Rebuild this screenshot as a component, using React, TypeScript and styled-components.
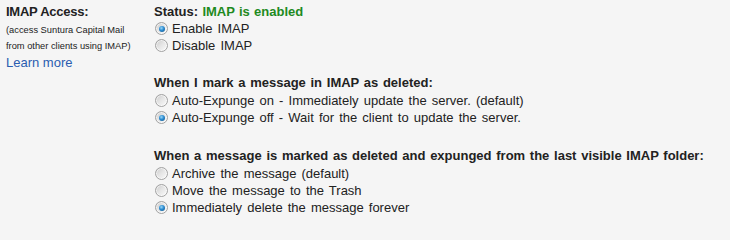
import React, {useState} from 'react';
import styled, {createGlobalStyle} from 'styled-components';

const GlobalStyle = createGlobalStyle`
    html, body {
        margin: 0;
        padding: 0;
        background: #f5f5f5;
    }
    body {
        font-family: Arial, "Liberation Sans", sans-serif;
        font-size: 13px;
        color: #222;
        overflow: hidden;
    }
`;

const Page = styled.div`
    display: grid;
    grid-template-columns: 148px 1fr;
    padding: 4px 0 0 6px;
    width: 730px;
    height: 224px;
    box-sizing: border-box;
`;

const Side = styled.div`
    display: flex;
    flex-direction: column;
`;

const SideTitle = styled.div`
    font-weight: bold;
    line-height: 16px;
    letter-spacing: -0.25px;
`;

const SideNote = styled.div`
    font-size: 9.3px;
    line-height: 16px;
    margin-top: 2px;
    color: #222;
`;

const LearnMore = styled.a`
    color: #2a5db0;
    text-decoration: none;
    line-height: 17px;
    cursor: pointer;
`;

const Main = styled.div`
    display: flex;
    flex-direction: column;
    word-spacing: 1.5px;
`;

const Group = styled.div<{$gap?: number}>`
    display: flex;
    flex-direction: column;
    margin-top: ${({$gap}) => $gap ?? 0}px;
`;

const Status = styled.div`
    font-weight: bold;
    line-height: 16px;
    word-spacing: 0.7px;
`;

const Enabled = styled.span`
    color: #1e8a1e;
`;

const Heading = styled.div`
    font-weight: bold;
    line-height: 17px;
    margin-bottom: 1px;
    word-spacing: 1.1px;
`;

const Option = styled.label`
    display: flex;
    align-items: center;
    height: 17px;
    gap: 4px;
    cursor: pointer;
`;

const Radio = styled.input.attrs({type: 'radio'})`
    appearance: none;
    -webkit-appearance: none;
    margin: 0 0 0 1px;
    width: 13px;
    height: 13px;
    border-radius: 50%;
    border: 1px solid #a2a2a2;
    background: linear-gradient(135deg, #c9c9c9 0%, #e4e4e4 45%, #fbfbfb 100%);
    box-shadow: inset 0 0 0 1px rgba(255, 255, 255, 0.6);
    box-sizing: border-box;
    position: relative;
    flex: none;

    &:checked::after {
        content: '';
        position: absolute;
        left: 2.5px;
        top: 2.5px;
        width: 6px;
        height: 6px;
        border-radius: 50%;
        background: radial-gradient(circle at 40% 35%, #9ad8f8 0%, #2a8ad0 45%, #12507f 100%);
    }
`;

type OptionDef = {value: string; label: string};

const RadioGroup: React.FC<{name: string; options: OptionDef[]; initial: string}> = ({name, options, initial}) => {
    const [value, setValue] = useState(initial);
    return (
        <>
            {options.map(o => (
                <Option key={o.value}>
                    <Radio name={name} checked={value === o.value} onChange={() => setValue(o.value)} />
                    {o.label}
                </Option>
            ))}
        </>
    );
};

export default function App() {
    return (
        <>
            <GlobalStyle />
            <Page>
                <Side>
                    <SideTitle>IMAP Access:</SideTitle>
                    <SideNote>
                        (access Suntura Capital Mail<br />from other clients using IMAP)
                    </SideNote>
                    <LearnMore>Learn more</LearnMore>
                </Side>
                <Main>
                    <Group>
                        <Status>
                            Status: <Enabled>IMAP is enabled</Enabled>
                        </Status>
                        <RadioGroup
                            name="imap"
                            initial="on"
                            options={[
                                {value: 'on', label: 'Enable IMAP'},
                                {value: 'off', label: 'Disable IMAP'},
                            ]}
                        />
                    </Group>
                    <Group $gap={20}>
                        <Heading>When I mark a message in IMAP as deleted:</Heading>
                        <RadioGroup
                            name="expunge"
                            initial="off"
                            options={[
                                {value: 'on', label: 'Auto-Expunge on - Immediately update the server. (default)'},
                                {value: 'off', label: 'Auto-Expunge off - Wait for the client to update the server.'},
                            ]}
                        />
                    </Group>
                    <Group $gap={21}>
                        <Heading>When a message is marked as deleted and expunged from the last visible IMAP folder:</Heading>
                        <RadioGroup
                            name="deleted"
                            initial="delete"
                            options={[
                                {value: 'archive', label: 'Archive the message (default)'},
                                {value: 'trash', label: 'Move the message to the Trash'},
                                {value: 'delete', label: 'Immediately delete the message forever'},
                            ]}
                        />
                    </Group>
                </Main>
            </Page>
        </>
    );
}
